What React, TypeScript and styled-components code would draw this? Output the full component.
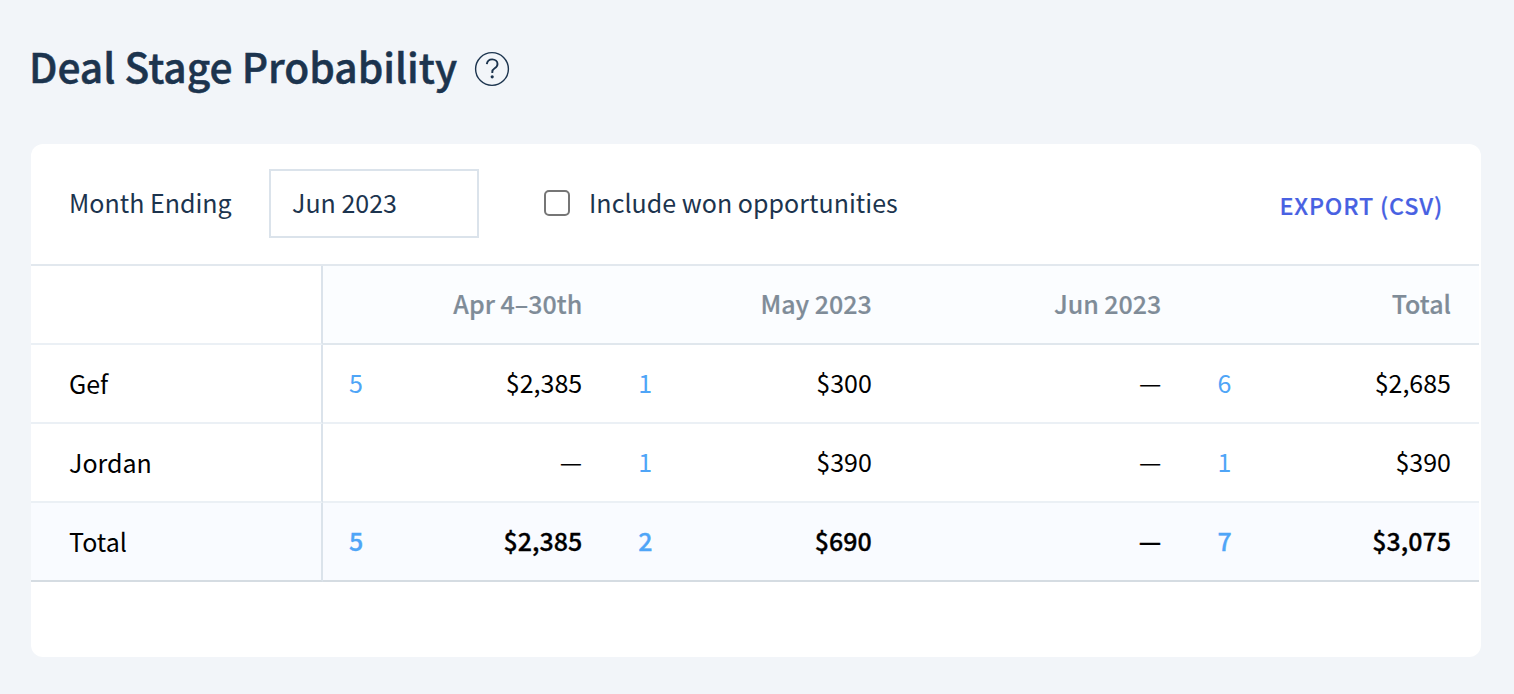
import { useState } from "react";
import styled, { createGlobalStyle } from "styled-components";

const GlobalStyle = createGlobalStyle`
    * {
        box-sizing: border-box;
    }

    body {
        margin: 0;
        background: #f2f5f9;
        color: #1c344e;
        font-family: "Source Sans Pro", "Noto Sans CJK SC", sans-serif;
        font-size: 25px;
        line-height: 36px;
    }
`;

const Page = styled.main`
    min-height: 694px;
    padding: 38px 33px 37px 29px;
`;

const Header = styled.header`
    display: flex;
    align-items: center;
    gap: 17px;
    height: 62px;
    margin-bottom: 44px;
`;

const Title = styled.h1`
    margin: 0;
    padding-bottom: 6px;
    font-size: 40.7px;
    font-weight: 500;
    line-height: 56px;
    white-space: nowrap;
    -webkit-text-stroke: 0.5px currentColor;
`;

const HelpButton = styled.button`
    display: flex;
    padding: 0;
    border: none;
    background: none;
    color: inherit;
`;

const Card = styled.section`
    height: 513px;
    margin-left: 2px;
    border-radius: 12px;
    background: #fff;
`;

const Toolbar = styled.div`
    display: flex;
    align-items: center;
    height: 120px;
    padding: 0 38px 2px;
`;

const MonthLabel = styled.label`
    width: 200px;
    padding-bottom: 2px;
`;

const MonthInput = styled.input`
    width: 210px;
    height: 69px;
    padding: 0 21px 2px;
    border: 2px solid #dbe3eb;
    border-radius: 0;
    background: #fff;
    color: inherit;
    font: inherit;
    outline: none;
`;

const CheckboxLabel = styled.label`
    display: flex;
    align-items: center;
    gap: 19px;
    margin-left: 65px;
`;

const CheckboxText = styled.span`
    padding-bottom: 2px;
    letter-spacing: 0.03px;
`;

const Checkbox = styled.input`
    appearance: none;
    width: 26px;
    height: 26px;
    margin: 0;
    border: 2px solid #767676;
    border-radius: 5px;
    background: #fff;
`;

const ExportButton = styled.button`
    margin-left: auto;
    padding: 4px 0 0;
    border: none;
    background: none;
    color: #4861e2;
    font: inherit;
    font-size: 23.3px;
    font-weight: 500;
    letter-spacing: 0.8px;
    -webkit-text-stroke: 0.2px currentColor;
`;

const Table = styled.div`
    width: 1448px;
    border-top: 2px solid #e2e8ee;
`;

const Row = styled.div<{ $total?: boolean }>`
    display: grid;
    grid-template-columns: 292px 287.2px 289.6px 289.6px 289.6px;
    height: 79px;
    background: ${({ $total }) => ($total ? "#f9fbff" : "#fff")};
    color: #000;
    font-weight: ${({ $total }) => ($total ? 500 : 400)};
    -webkit-text-stroke: ${({ $total }) => ($total ? "0.3px" : "0")};
`;

const NameCell = styled.div<{ $last?: boolean }>`
    display: flex;
    align-items: center;
    padding: 0 0 2px 38px;
    border-right: 2px solid #dbe3eb;
    border-bottom: 2px solid ${({ $last }) => ($last ? "#d5dce2" : "#ebf0f5")};
    font-weight: 400;
    -webkit-text-stroke: 0;
`;

const HeadCell = styled.div`
    display: flex;
    align-items: center;
    justify-content: flex-end;
    padding: 0 28px 4px 0;
    border-bottom: 2px solid #e0e7ed;
    background: #fbfdff;
    color: #7f8c98;
    font-weight: 500;
    -webkit-text-stroke: 0.2px currentColor;
`;

const Cell = styled.div<{ $last?: boolean }>`
    display: flex;
    align-items: center;
    justify-content: space-between;
    padding: 0 28px 4px;
    border-bottom: 2px solid ${({ $last }) => ($last ? "#d5dce2" : "#ebf0f5")};

    &:nth-child(2) {
        padding-left: 26px;
    }
`;

const Count = styled.span`
    color: #4fa5f7;
`;

const Amount = styled.span`
    margin-left: auto;
`;

type Entry = { count?: number; amount: string };

const months = ["Apr 4–30th", "May 2023", "Jun 2023", "Total"];

const rows: { name: string; entries: Entry[] }[] = [
    {
        name: "Gef",
        entries: [
            { count: 5, amount: "$2,385" },
            { count: 1, amount: "$300" },
            { amount: "—" },
            { count: 6, amount: "$2,685" }
        ]
    },
    {
        name: "Jordan",
        entries: [
            { amount: "—" },
            { count: 1, amount: "$390" },
            { amount: "—" },
            { count: 1, amount: "$390" }
        ]
    },
    {
        name: "Total",
        entries: [
            { count: 5, amount: "$2,385" },
            { count: 2, amount: "$690" },
            { amount: "—" },
            { count: 7, amount: "$3,075" }
        ]
    }
];

const HelpIcon = () => (
    <svg width="36" height="36" viewBox="0 0 36 36" fill="none">
        <circle cx="18" cy="18" r="16.4" stroke="currentColor" strokeWidth="1.4" />
        <path
            d="M12.8 13.2C13.2 10.2 15.2 8.4 18.2 8.4C21.3 8.4 23.5 10.3 23.5 13C23.5 15 22.5 16.2 20.7 17.3C18.9 18.4 18.3 19.3 18.3 21.1V22"
            stroke="currentColor"
            strokeWidth="1.9"
        />
        <circle cx="18.2" cy="25.8" r="1.6" fill="currentColor" />
    </svg>
);

const App = () => {
    const [month, setMonth] = useState<string>("Jun 2023");

    return (
        <>
            <GlobalStyle />
            <Page>
                <Header>
                    <Title>Deal Stage Probability</Title>
                    <HelpButton aria-label="Help">
                        <HelpIcon />
                    </HelpButton>
                </Header>
                <Card>
                    <Toolbar>
                        <MonthLabel htmlFor="month">Month Ending</MonthLabel>
                        <MonthInput
                            id="month"
                            value={month}
                            onChange={(e) => setMonth(e.target.value)}
                        />
                        <CheckboxLabel>
                            <Checkbox type="checkbox" />
                            <CheckboxText>Include won opportunities</CheckboxText>
                        </CheckboxLabel>
                        <ExportButton>EXPORT (CSV)</ExportButton>
                    </Toolbar>
                    <Table>
                        <Row>
                            <NameCell />
                            {months.map((label) => (
                                <HeadCell key={label}>{label}</HeadCell>
                            ))}
                        </Row>
                        {rows.map(({ name, entries }) => {
                            const isTotal = name === "Total";
                            return (
                                <Row key={name} $total={isTotal}>
                                    <NameCell $last={isTotal}>{name}</NameCell>
                                    {entries.map(({ count, amount }, index) => (
                                        <Cell key={months[index]} $last={isTotal}>
                                            {count && <Count>{count}</Count>}
                                            <Amount>{amount}</Amount>
                                        </Cell>
                                    ))}
                                </Row>
                            );
                        })}
                    </Table>
                </Card>
            </Page>
        </>
    );
};

export default App;
